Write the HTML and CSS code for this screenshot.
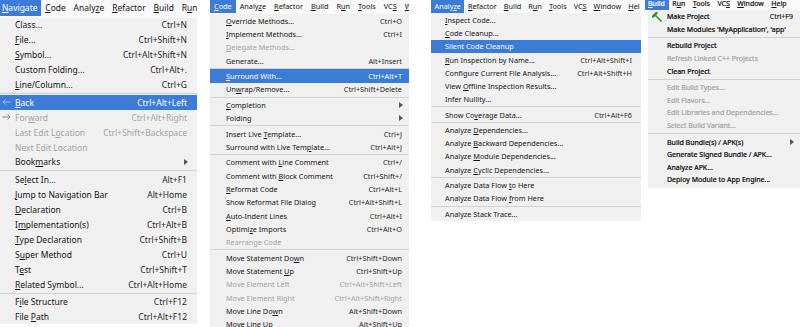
FILE: index.html
```html
<!DOCTYPE html>
<html>
<head>
<meta charset="utf-8">
<title>Menus</title>
<link rel="stylesheet" href="styles.css">
</head>
<body>
<div class="screen">

<section class="panel p1">
  <div class="menubar">
    <span class="mb on"><u>N</u>avigate</span><span class="mb"><u>C</u>ode</span><span class="mb">Analy<u>z</u>e</span><span class="mb"><u>R</u>efactor</span><span class="mb"><u>B</u>uild</span><span class="mb">R<u>u</u>n</span>
  </div>
  <ul class="menu">
    <li class="item"><span class="gut"></span><span class="label">Class...</span><span class="key">Ctrl+N</span></li>
    <li class="item"><span class="gut"></span><span class="label"><u>F</u>ile...</span><span class="key">Ctrl+Shift+N</span></li>
    <li class="item"><span class="gut"></span><span class="label"><u>S</u>ymbol...</span><span class="key">Ctrl+Alt+Shift+N</span></li>
    <li class="item"><span class="gut"></span><span class="label">Custom Folding...</span><span class="key">Ctrl+Alt+.</span></li>
    <li class="item"><span class="gut"></span><span class="label"><u>L</u>ine/Column...</span><span class="key">Ctrl+G</span></li>
    <li class="sep"></li>
    <li class="item sel"><span class="gut"><svg class="arr" viewBox="0 0 9 6"><path d="M8.5 3H1M3.5 0.5L1 3l2.5 2.5" fill="none" stroke="#9fbde8" stroke-width="1"/></svg></span><span class="label"><u>B</u>ack</span><span class="key">Ctrl+Alt+Left</span></li>
    <li class="item dis"><span class="gut"><svg class="arr" viewBox="0 0 9 6"><path d="M0.5 3H8M5.5 0.5L8 3 5.5 5.5" fill="none" stroke="#8a8a8a" stroke-width="1"/></svg></span><span class="label">For<u>w</u>ard</span><span class="key">Ctrl+Alt+Right</span></li>
    <li class="item dis"><span class="gut"></span><span class="label">Last Edit L<u>o</u>cation</span><span class="key">Ctrl+Shift+Backspace</span></li>
    <li class="item dis"><span class="gut"></span><span class="label">Next Edit Location</span><span class="key"></span></li>
    <li class="item"><span class="gut"></span><span class="label">Book<u>m</u>arks</span><span class="key"><svg class="sub" viewBox="0 0 4 6"><path d="M0 0L4 3 0 6z" fill="#555"/></svg></span></li>
    <li class="sep"></li>
    <li class="item"><span class="gut"></span><span class="label">Se<u>l</u>ect In...</span><span class="key">Alt+F1</span></li>
    <li class="item"><span class="gut"></span><span class="label"><u>J</u>ump to Navigation Bar</span><span class="key">Alt+Home</span></li>
    <li class="item"><span class="gut"></span><span class="label"><u>D</u>eclaration</span><span class="key">Ctrl+B</span></li>
    <li class="item"><span class="gut"></span><span class="label">I<u>m</u>plementation(s)</span><span class="key">Ctrl+Alt+B</span></li>
    <li class="item"><span class="gut"></span><span class="label"><u>T</u>ype Declaration</span><span class="key">Ctrl+Shift+B</span></li>
    <li class="item"><span class="gut"></span><span class="label">S<u>u</u>per Method</span><span class="key">Ctrl+U</span></li>
    <li class="item"><span class="gut"></span><span class="label">T<u>e</u>st</span><span class="key">Ctrl+Shift+T</span></li>
    <li class="item"><span class="gut"></span><span class="label"><u>R</u>elated Symbol...</span><span class="key">Ctrl+Alt+Home</span></li>
    <li class="sep"></li>
    <li class="item"><span class="gut"></span><span class="label">F<u>i</u>le Structure</span><span class="key">Ctrl+F12</span></li>
    <li class="item"><span class="gut"></span><span class="label">File <u>P</u>ath</span><span class="key">Ctrl+Alt+F12</span></li>
  </ul>
</section>

<section class="panel p2">
  <div class="menubar">
    <span class="mb on"><u>C</u>ode</span><span class="mb">Analy<u>z</u>e</span><span class="mb"><u>R</u>efactor</span><span class="mb"><u>B</u>uild</span><span class="mb">R<u>u</u>n</span><span class="mb"><u>T</u>ools</span><span class="mb">VC<u>S</u></span><span class="mb"><u>W</u>i</span>
  </div>
  <ul class="menu">
    <li class="item"><span class="gut"></span><span class="label"><u>O</u>verride Methods...</span><span class="key">Ctrl+O</span></li>
    <li class="item"><span class="gut"></span><span class="label"><u>I</u>mplement Methods...</span><span class="key">Ctrl+I</span></li>
    <li class="item dis"><span class="gut"></span><span class="label"><u>D</u>elegate Methods...</span><span class="key"></span></li>
    <li class="item"><span class="gut"></span><span class="label">Generate...</span><span class="key">Alt+Insert</span></li>
    <li class="sep"></li>
    <li class="item sel"><span class="gut"></span><span class="label"><u>S</u>urround With...</span><span class="key">Ctrl+Alt+T</span></li>
    <li class="item"><span class="gut"></span><span class="label">Un<u>w</u>rap/Remove...</span><span class="key">Ctrl+Shift+Delete</span></li>
    <li class="sep"></li>
    <li class="item"><span class="gut"></span><span class="label"><u>C</u>ompletion</span><span class="key"><svg class="sub" viewBox="0 0 4 6"><path d="M0 0L4 3 0 6z" fill="#555"/></svg></span></li>
    <li class="item"><span class="gut"></span><span class="label">Folding</span><span class="key"><svg class="sub" viewBox="0 0 4 6"><path d="M0 0L4 3 0 6z" fill="#555"/></svg></span></li>
    <li class="sep"></li>
    <li class="item"><span class="gut"></span><span class="label">Insert Live <u>T</u>emplate...</span><span class="key">Ctrl+J</span></li>
    <li class="item"><span class="gut"></span><span class="label">Surround with Live Tem<u>p</u>late...</span><span class="key">Ctrl+Alt+J</span></li>
    <li class="sep"></li>
    <li class="item"><span class="gut"></span><span class="label">Comment with <u>L</u>ine Comment</span><span class="key">Ctrl+/</span></li>
    <li class="item"><span class="gut"></span><span class="label">Comment with <u>B</u>lock Comment</span><span class="key">Ctrl+Shift+/</span></li>
    <li class="item"><span class="gut"></span><span class="label"><u>R</u>eformat Code</span><span class="key">Ctrl+Alt+L</span></li>
    <li class="item"><span class="gut"></span><span class="label">Show Reformat File Dialog</span><span class="key">Ctrl+Alt+Shift+L</span></li>
    <li class="item"><span class="gut"></span><span class="label"><u>A</u>uto-Indent Lines</span><span class="key">Ctrl+Alt+I</span></li>
    <li class="item"><span class="gut"></span><span class="label">Optimi<u>z</u>e Imports</span><span class="key">Ctrl+Alt+O</span></li>
    <li class="item dis"><span class="gut"></span><span class="label">Rearrange Code</span><span class="key"></span></li>
    <li class="sep"></li>
    <li class="item"><span class="gut"></span><span class="label">Move Statement Do<u>w</u>n</span><span class="key">Ctrl+Shift+Down</span></li>
    <li class="item"><span class="gut"></span><span class="label">Move Statement <u>U</u>p</span><span class="key">Ctrl+Shift+Up</span></li>
    <li class="item dis"><span class="gut"></span><span class="label">Move Element Left</span><span class="key">Ctrl+Alt+Shift+Left</span></li>
    <li class="item dis"><span class="gut"></span><span class="label">Move Element Right</span><span class="key">Ctrl+Alt+Shift+Right</span></li>
    <li class="item"><span class="gut"></span><span class="label">Move Line Do<u>w</u>n</span><span class="key">Alt+Shift+Down</span></li>
    <li class="item"><span class="gut"></span><span class="label">Move Line <u>U</u>p</span><span class="key">Alt+Shift+Up</span></li>
  </ul>
</section>

<section class="panel p3">
  <div class="menubar">
    <span class="mb on">Analy<u>z</u>e</span><span class="mb"><u>R</u>efactor</span><span class="mb"><u>B</u>uild</span><span class="mb">R<u>u</u>n</span><span class="mb"><u>T</u>ools</span><span class="mb">VC<u>S</u></span><span class="mb"><u>W</u>indow</span><span class="mb"><u>H</u>el</span>
  </div>
  <ul class="menu">
    <li class="item"><span class="gut"></span><span class="label"><u>I</u>nspect Code...</span><span class="key"></span></li>
    <li class="item"><span class="gut"></span><span class="label"><u>C</u>ode Cleanup...</span><span class="key"></span></li>
    <li class="item sel"><span class="gut"></span><span class="label">Silent Code Cleanup</span><span class="key"></span></li>
    <li class="item"><span class="gut"></span><span class="label"><u>R</u>un Inspection by Name...</span><span class="key">Ctrl+Alt+Shift+I</span></li>
    <li class="item"><span class="gut"></span><span class="label">Configure Current File Analysis...</span><span class="key">Ctrl+Alt+Shift+H</span></li>
    <li class="item"><span class="gut"></span><span class="label">View <u>O</u>ffline Inspection Results...</span><span class="key"></span></li>
    <li class="item"><span class="gut"></span><span class="label">Infer Nullity...</span><span class="key"></span></li>
    <li class="sep"></li>
    <li class="item"><span class="gut"></span><span class="label">Show Co<u>v</u>erage Data...</span><span class="key">Ctrl+Alt+F6</span></li>
    <li class="sep"></li>
    <li class="item"><span class="gut"></span><span class="label">Analyze <u>D</u>ependencies...</span><span class="key"></span></li>
    <li class="item"><span class="gut"></span><span class="label">Analyze <u>B</u>ackward Dependencies...</span><span class="key"></span></li>
    <li class="item"><span class="gut"></span><span class="label">Analyze <u>M</u>odule Dependencies...</span><span class="key"></span></li>
    <li class="item"><span class="gut"></span><span class="label">Analyze <u>C</u>yclic Dependencies...</span><span class="key"></span></li>
    <li class="sep"></li>
    <li class="item"><span class="gut"></span><span class="label">Analyze Data Flow <u>t</u>o Here</span><span class="key"></span></li>
    <li class="item"><span class="gut"></span><span class="label">Analyze Data Flow <u>f</u>rom Here</span><span class="key"></span></li>
    <li class="sep"></li>
    <li class="item"><span class="gut"></span><span class="label">Analyze Stack Trace...</span><span class="key"></span></li>
  </ul>
</section>

<section class="panel p4">
  <div class="menubar">
    <span class="mb on"><u>B</u>uild</span><span class="mb">R<u>u</u>n</span><span class="mb"><u>T</u>ools</span><span class="mb">VC<u>S</u></span><span class="mb"><u>W</u>indow</span><span class="mb"><u>H</u>elp</span>
  </div>
  <ul class="menu">
    <li class="item"><span class="gut"><svg class="hammer" viewBox="0 0 10 10"><path d="M9.2 9.2L3.4 3.4" stroke="#4f9a45" stroke-width="1.7" stroke-linecap="round"/><path d="M0.9 4.6L4.6 0.9" stroke="#3f8a3a" stroke-width="2.4" stroke-linecap="round"/></svg></span><span class="label">Make Project</span><span class="key">Ctrl+F9</span></li>
    <li class="item"><span class="gut"></span><span class="label">Make Modules 'MyApplication', 'app'</span><span class="key"></span></li>
    <li class="sep"></li>
    <li class="item"><span class="gut"></span><span class="label">Rebuild Project</span><span class="key"></span></li>
    <li class="item dis"><span class="gut"></span><span class="label">Refresh Linked C++ Projects</span><span class="key"></span></li>
    <li class="item"><span class="gut"></span><span class="label">Clean Project</span><span class="key"></span></li>
    <li class="sep"></li>
    <li class="item dis"><span class="gut"></span><span class="label">Edit Build Types...</span><span class="key"></span></li>
    <li class="item dis"><span class="gut"></span><span class="label">Edit Flavors...</span><span class="key"></span></li>
    <li class="item dis"><span class="gut"></span><span class="label">Edit Libraries and Dependencies...</span><span class="key"></span></li>
    <li class="item dis"><span class="gut"></span><span class="label">Select Build Variant...</span><span class="key"></span></li>
    <li class="sep"></li>
    <li class="item"><span class="gut"></span><span class="label">Build Bundle(s) / APK(s)</span><span class="key"><svg class="sub" viewBox="0 0 4 6"><path d="M0 0L4 3 0 6z" fill="#555"/></svg></span></li>
    <li class="item"><span class="gut"></span><span class="label">Generate Signed Bundle / APK...</span><span class="key"></span></li>
    <li class="item"><span class="gut"></span><span class="label">Analyze APK...</span><span class="key"></span></li>
    <li class="item"><span class="gut"></span><span class="label">Deploy Module to App Engine...</span><span class="key"></span></li>
  </ul>
</section>

</div>
</body>
</html>
```

FILE: styles.css
```css
html, body {
  margin: 0;
  padding: 0;
  background: #ffffff;
}

body {
  width: 800px;
  height: 327px;
  overflow: hidden;
  font-family: "Noto Sans", "Open Sans", sans-serif;
  color: #141414;
}

.screen {
  display: flex;
  align-items: flex-start;
  width: 800px;
  height: 327px;
  overflow: hidden;
}

.panel {
  flex: none;
  display: flex;
  flex-direction: column;
  font-size: var(--fs);
}

.p1 {
  width: 197px;
  --fs: 8.5px;
  --bar: 17.5px;
  --barItem: 16px;
  --barPad: 3.9px;
  --row: 14.9px;
  --sep: 3px;
  --gut: 15px;
  --padr: 10px;
}

.p2 {
  width: 199px;
  margin-left: 13px;
  --fs: 7.3px;
  --bar: 14px;
  --barItem: 13px;
  --barPad: 4px;
  --row: 13.3px;
  --sep: 2.2px;
  --gut: 16px;
  --padr: 7px;
}

.p3 {
  width: 210px;
  margin-left: 22px;
  --fs: 7.3px;
  --bar: 13.4px;
  --barItem: 13px;
  --barPad: 3.5px;
  --row: 13.2px;
  --sep: 2.3px;
  --gut: 14px;
  --padr: 9px;
}

.p4 {
  width: 152px;
  margin-left: 7px;
  --fs: 7px;
  --bar: 10.4px;
  --barItem: 10px;
  --barPad: 3px;
  --row: 12.6px;
  --sep: 4px;
  --gut: 19px;
  --padr: 7px;
  color: #050505;
  -webkit-text-stroke: 0.2px currentColor;
}

.menubar {
  height: var(--bar);
  display: flex;
  align-items: flex-start;
  white-space: nowrap;
  overflow: hidden;
  background: #f9f9f9;
  color: #141414;
}

.p1 .menubar {
  margin-left: -2px;
}

.p4 .menubar {
  margin-left: -3px;
}

.mb {
  height: var(--barItem);
  line-height: var(--barItem);
  padding: 0 var(--barPad);
  flex: none;
}

.p4 .mb {
  line-height: 8px;
  padding-right: calc(var(--barPad) + 1.5px);
}

.mb.on {
  background: #3c7cd6;
  color: #ffffff;
}

.menu {
  list-style: none;
  margin: 0;
  padding: 0;
  background: #f0f0f0;
}

.p3 .menu {
  padding-bottom: 1px;
}

.p4 .menu {
  padding-bottom: 2px;
}

.item {
  height: var(--row);
  display: flex;
  align-items: center;
  padding-right: var(--padr);
  white-space: nowrap;
}

.gut {
  flex: none;
  width: var(--gut);
  display: flex;
  align-items: center;
}

.label {
  flex: 1;
}

.key {
  flex: none;
  color: #262626;
  display: flex;
  align-items: center;
}

.item.dis .label,
.item.dis .key {
  color: #a3a3a3;
}

.item.sel {
  background: #3c7cd6;
}

.item.sel .label,
.item.sel .key {
  color: #ffffff;
}

.sep {
  height: var(--sep);
  display: flex;
  align-items: center;
}

.sep::before {
  content: "";
  flex: 1;
  height: 1px;
  background: #d2d2d2;
}

u {
  text-decoration: underline;
  text-underline-offset: 1px;
  text-decoration-thickness: 1px;
}

.arr {
  width: 9px;
  height: 6px;
  margin-left: 2px;
}

.sub {
  width: 4px;
  height: 6px;
  margin-right: -1px;
}

.hammer {
  width: 10px;
  height: 10px;
  margin-left: 4px;
}
```
